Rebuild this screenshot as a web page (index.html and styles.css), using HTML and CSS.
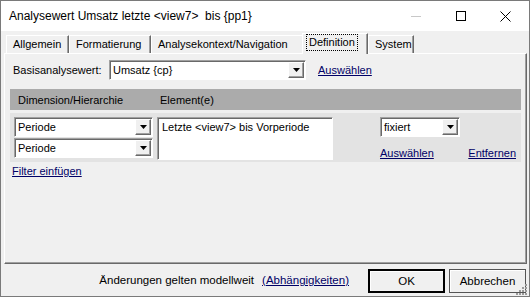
FILE: index.html
```html
<!DOCTYPE html>
<html>
<head>
  <title>Analysewert</title>
  <link rel="stylesheet" href="styles.css">
</head>
<body>
  <div class="window">
    <div class="titlebar">
      <span class="title">Analysewert Umsatz letzte &lt;view7&gt;&nbsp; bis {pp1}</span>
      <div class="caption">
        <span class="cap"><svg width="10" height="10" viewBox="0 0 10 10"><path d="M0 5.5H10" stroke="#c8c8c8" stroke-width="1"/></svg></span>
        <span class="cap"><svg width="10" height="10" viewBox="0 0 10 10"><rect x="0.5" y="0.5" width="9" height="9" fill="none" stroke="#000" stroke-width="1"/></svg></span>
        <span class="cap"><svg width="11" height="11" viewBox="0 0 11 11"><path d="M0.5 0.5L10.5 10.5M10.5 0.5L0.5 10.5" stroke="#000" stroke-width="1"/></svg></span>
      </div>
    </div>

    <div class="client">
      <div class="tabs">
        <div class="tab t-allg">Allgemein</div>
        <div class="tab t-form">Formatierung</div>
        <div class="tab t-ana">Analysekontext/Navigation</div>
        <div class="tab active t-def"><span class="focus">Definition</span></div>
        <div class="tab t-sys">System</div>
      </div>

      <div class="panel">
        <div class="base-row">
          <span class="label">Basisanalysewert:</span>
          <div class="combo base-combo">
            <span class="combo-text">Umsatz {cp}</span>
            <span class="combo-btn"><svg width="7" height="4" viewBox="0 0 7 4"><path d="M0 0H7L3.5 4Z" fill="#000"/></svg></span>
          </div>
          <a class="link base-link">Auswählen</a>
        </div>

        <div class="grid-head">
          <span class="col-dim">Dimension/Hierarchie</span>
          <span>Element(e)</span>
        </div>

        <div class="grid-row">
          <div class="dims">
            <div class="combo dim-combo">
              <span class="combo-text">Periode</span>
              <span class="combo-btn"><svg width="7" height="4" viewBox="0 0 7 4"><path d="M0 0H7L3.5 4Z" fill="#000"/></svg></span>
            </div>
            <div class="combo dim-combo">
              <span class="combo-text">Periode</span>
              <span class="combo-btn"><svg width="7" height="4" viewBox="0 0 7 4"><path d="M0 0H7L3.5 4Z" fill="#000"/></svg></span>
            </div>
          </div>
          <div class="elements">Letzte &lt;view7&gt; bis Vorperiode</div>
          <div class="mode">
            <div class="combo mode-combo">
              <span class="combo-text">fixiert</span>
              <span class="combo-btn"><svg width="7" height="4" viewBox="0 0 7 4"><path d="M0 0H7L3.5 4Z" fill="#000"/></svg></span>
            </div>
            <div class="mode-links">
              <a class="link">Auswählen</a>
              <a class="link">Entfernen</a>
            </div>
          </div>
        </div>

        <a class="link filter">Filter einfügen</a>
      </div>

      <div class="footer">
        <span class="note">Änderungen gelten modellweit</span>
        <a class="link deps">(Abhängigkeiten)</a>
        <button class="btn default">OK</button>
        <button class="btn">Abbrechen</button>
      </div>
    </div>

    <svg class="grip" width="12" height="12" viewBox="0 0 12 12">
      <g fill="#9a9a9a">
        <rect x="9" y="1" width="2" height="2"/>
        <rect x="6" y="4" width="2" height="2"/><rect x="9" y="4" width="2" height="2"/>
        <rect x="3" y="7" width="2" height="2"/><rect x="6" y="7" width="2" height="2"/><rect x="9" y="7" width="2" height="2"/>
        <rect x="0" y="10" width="2" height="2"/><rect x="3" y="10" width="2" height="2"/><rect x="6" y="10" width="2" height="2"/><rect x="9" y="10" width="2" height="2"/>
      </g>
    </svg>
  </div>
</body>
</html>
```

FILE: styles.css
```css
body {
  margin: 0;
  font-family: "Liberation Sans", Arial, sans-serif;
  font-size: 11px;
  color: #000;
}

.window {
  position: relative;
  width: 530px;
  height: 297px;
  box-sizing: border-box;
  border: 1px solid #7a7a7a;
  background-color: #f0f0f0;
  display: flex;
  flex-direction: column;
}

.titlebar {
  height: 30px;
  flex: none;
  display: flex;
  align-items: center;
  background-color: #fff;
}

.title {
  padding-left: 8px;
  font-size: 12px;
  flex: 1;
}

.caption {
  display: flex;
  height: 30px;
  margin-right: 1px;
}

.cap {
  width: 45px;
  display: flex;
  align-items: center;
  justify-content: center;
}

.client {
  flex: 1;
  display: flex;
  flex-direction: column;
  padding: 0 2px 0 3px;
}

/* tab strip */
.tabs {
  display: flex;
  align-items: flex-end;
  height: 23px;
  padding-left: 2px;
  position: relative;
  z-index: 1;
  margin-bottom: -1px;
}

.tab {
  height: 18px;
  box-sizing: border-box;
  line-height: 17px;
  padding-left: 6px;
  border-top: 1px solid #fff;
  border-left: 1px solid #fff;
  border-right: 1px solid #696969;
  box-shadow: inset -1px 0 #a0a0a0;
  margin-bottom: 1px;
  background-color: #f0f0f0;
}

.t-allg { width: 63px; }
.t-form { width: 82px; }
.t-ana { width: 153px; }
.t-def { width: 62px; }
.t-sys { width: 46px; }

.tab.active {
  height: 21px;
  margin: 0 -2px 0 -2px;
  width: 66px;
  padding-left: 4px;
  margin-bottom: 0;
  line-height: 16px;
  position: relative;
}

.tab.active + .tab {
  margin-left: 2px;
}

.focus {
  display: inline-block;
  outline: 1px dotted #000;
  outline-offset: 0;
  padding: 0 2px;
  line-height: 15px;
  margin-top: 1px;
}

.panel {
  height: 211px;
  box-sizing: border-box;
  border-top: 1px solid #fff;
  border-left: 1px solid #fff;
  border-right: 1px solid #696969;
  border-bottom: 1px solid #696969;
  box-shadow: inset -1px -1px #a0a0a0;
  display: flex;
  flex-direction: column;
  padding: 6px 5px 0 5px;
}

.base-row {
  display: flex;
  align-items: center;
  height: 20px;
}

.label {
  padding-left: 3px;
  box-sizing: border-box;
  width: 99px;
}

.combo {
  display: flex;
  height: 20px;
  box-sizing: border-box;
  border: 1px solid;
  border-color: #a0a0a0 #fff #fff #a0a0a0;
  box-shadow: inset 1px 1px #696969;
  background-color: #fff;
}

.combo-text {
  flex: 1;
  line-height: 17px;
  padding: 1px 0 0 3px;
  white-space: nowrap;
}

.combo-btn {
  width: 16px;
  margin: 1px 1px 1px 0;
  box-sizing: border-box;
  border: 1px solid;
  border-color: #fff #696969 #696969 #fff;
  box-shadow: inset -1px -1px #a0a0a0;
  background-color: #f0f0f0;
  display: flex;
  align-items: center;
  justify-content: center;
}

.base-combo {
  width: 197px;
}

.link {
  color: #000066;
  text-decoration: underline;
  cursor: pointer;
}

.base-link {
  margin-left: 12px;
}

.grid-head {
  margin-top: 9px;
  height: 21px;
  background-color: #ababab;
  display: flex;
  align-items: center;
  padding-left: 8px;
}

.col-dim {
  width: 142px;
}

.grid-row {
  margin-top: 3px;
  height: 49px;
  box-sizing: border-box;
  background-color: #e3e3e3;
  display: flex;
  padding: 4px 0 0 4px;
}

.dims {
  display: flex;
  flex-direction: column;
  gap: 1px;
}

.dim-combo {
  width: 139px;
}

.elements {
  margin-left: 4px;
  width: 176px;
  height: 43px;
  box-sizing: border-box;
  border: 1px solid;
  border-color: #a0a0a0 #fff #fff #a0a0a0;
  box-shadow: inset 1px 1px #696969;
  background-color: #fff;
  padding: 3px 4px;
}

.mode {
  margin-left: 47px;
  width: 136px;
  display: flex;
  flex-direction: column;
}

.mode-combo {
  width: 80px;
}

.mode-links {
  display: flex;
  justify-content: space-between;
  margin-top: 10px;
}

.filter {
  margin-top: 3px;
  margin-left: 2px;
  align-self: flex-start;
}

.footer {
  flex: 1;
  display: flex;
  align-items: center;
  padding-right: 1px;
}

.note {
  margin-left: auto;
  font-size: 11.5px;
}

.deps {
  margin-left: 8px;
  margin-right: 19px;
  font-size: 11.5px;
}

.btn {
  width: 77px;
  height: 24px;
  box-sizing: border-box;
  font: inherit;
  font-size: 11.5px;
  background-color: #f0f0f0;
  border: 1px solid #555;
  box-shadow: inset 1px 1px #fff;
  padding: 0;
  margin-top: 1px;
}

.btn.default {
  border: 2px solid #000;
  margin-right: 4px;
}

.grip {
  position: absolute;
  right: 1px;
  bottom: 1px;
}
```
